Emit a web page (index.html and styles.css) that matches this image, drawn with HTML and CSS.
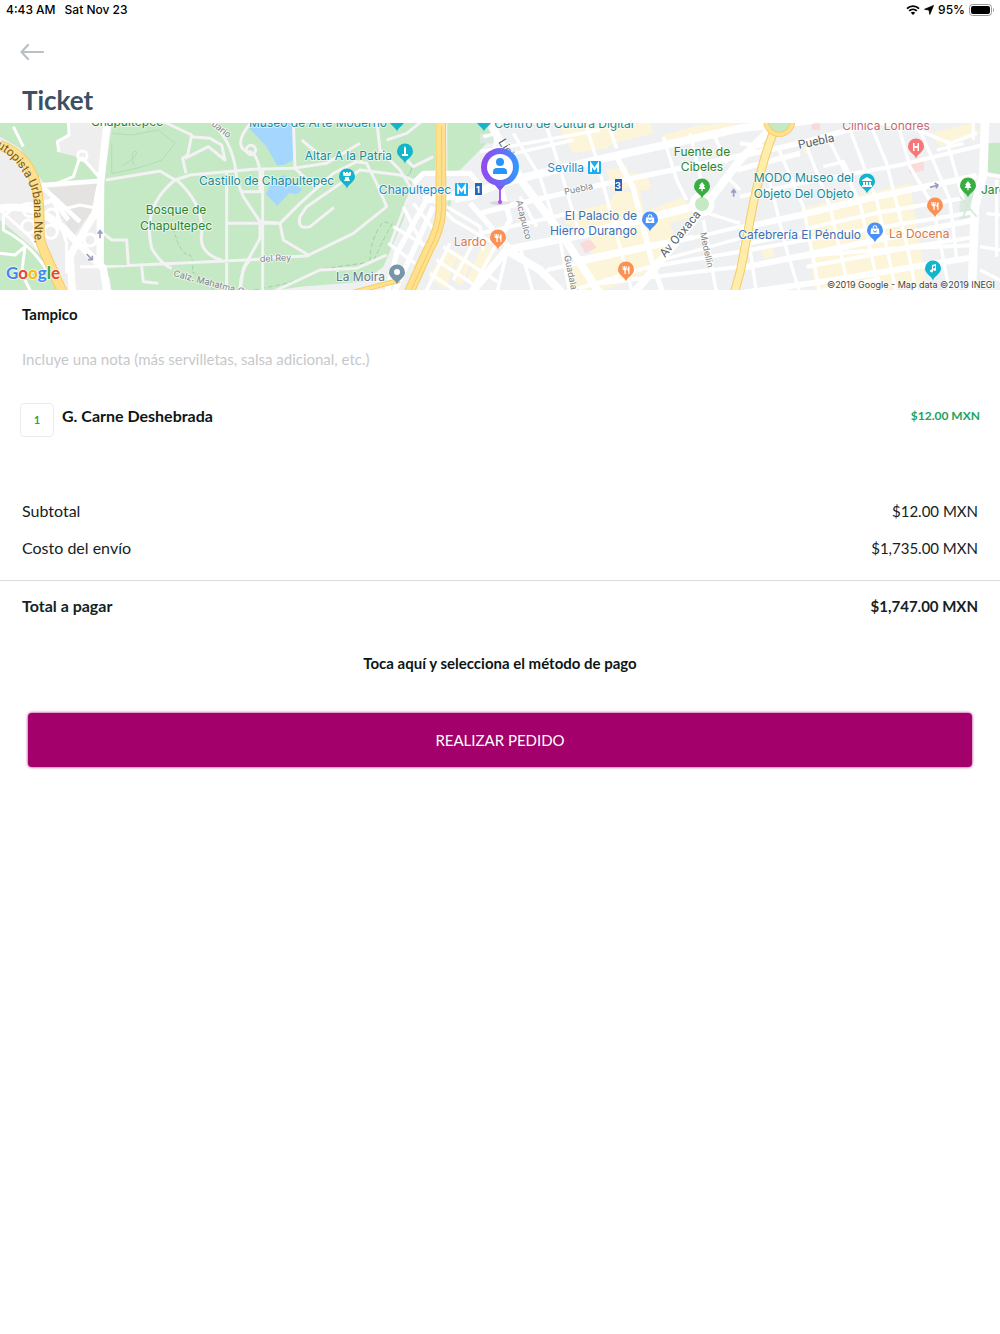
FILE: index.html
```
<!DOCTYPE html>
<html lang="es">
<head>
<meta charset="utf-8">
<meta name="viewport" content="width=device-width, initial-scale=1">
<title>Ticket</title>
<link rel="stylesheet" href="styles.css">
</head>
<body>
<div class="status">
  <div class="status-group"><span>4:43 AM</span><span>Sat Nov 23</span></div>
  <div class="status-side">
    <svg class="wifi" viewBox="0 0 14 10" aria-hidden="true"><path d="M1 3.6a8.6 8.6 0 0 1 12 0M3.2 5.9a5.5 5.5 0 0 1 7.6 0" fill="none" stroke="#000" stroke-width="1.9"/><path d="M7 10 4.8 7.8a3.1 3.1 0 0 1 4.4 0z"/></svg>
    <svg class="locate" viewBox="0 0 10 10" aria-hidden="true"><path d="M9.500.5 5.800 9.400 5 5 .6 4.300z" stroke="#000" stroke-width=".8" stroke-linejoin="round"/></svg>
    <span>95%</span>
    <svg class="battery" viewBox="0 0 25 12" aria-hidden="true"><rect x=".5" y=".5" width="22" height="11" rx="3" fill="none" stroke="#999"/><rect x="2" y="2" width="19" height="8" rx="2"/><path d="M24 4v4q1-.6 1-2t-1-2" fill="#999"/></svg>
  </div>
</div>

<header class="header">
  <button class="back" type="button" aria-label="Volver"><svg viewBox="0 0 24 18"><path d="M23 9H1.500M8 2 1.500 9 8 16" fill="none" stroke="#b9c1c8" stroke-width="2.200" stroke-linecap="round" stroke-linejoin="round"/></svg></button>
  <h1>Ticket</h1>
</header>

<main>
<svg class="map" viewBox="0 123 1000 167" preserveAspectRatio="xMidYMid slice" role="img" aria-label="Mapa de entrega">
  <defs>
    <linearGradient id="halo" x1="0" y1="0" x2="1" y2="0"><stop offset="0" stop-color="#9448ee"/><stop offset=".5" stop-color="#6d68f4"/><stop offset="1" stop-color="#2d9cff"/></linearGradient>
    <path id="pin" d="M0 11.500C-1 7-8 5-8 -.5a8 8 0 0 1 16 0C8 5 1 7 0 11.500z"/>
    <path id="fork" d="M-3.500-4h1v2h.6v-2h1v2h.6v-2h1v3q0 1.200-1 1.600V4h-1.300V.6q-1-.4-1.900-1.600zM1.500-1q0-2.600 2-3V4H2.300V1h-.8z" fill="#fff"/>
    <path id="tree" d="M0-5-3-1h1.300L-3.500 2H-.6V4.200H.6V2h2.900L1.700-1H3z" fill="#fff"/>
    <g id="bag"><path d="M-4-1.500h8l.4 5.500h-8.800z" fill="#fff"/><path d="M-1.800-1.500v-1a1.800 1.800 0 0 1 3.600 0v1" fill="none" stroke="#fff" stroke-width="1.100"/><path d="M-1.500 .5a1.500 1.500 0 0 0 3 0" fill="none" stroke="#4a90f5"/></g>
  </defs>
  <rect y="123" width="1000" height="167" fill="#eef0f2"/>

  <svg x="0" y="120" width="1000" height="174" viewBox="0 0 3000 522">
    <!-- ground -->
    <path fill="#efeeee" d="M0 0H330L310 522H0z"/>
    <path fill="#e4e3e2" d="M140 205 300 190 285 260 220 350 180 280z"/>
    <path fill="#c5e8c5" d="M0 0H205V40L172 65 170 95 230 110 295 165V186L140 198 100 150 60 85 0 50zM0 300 130 410 190 522H0zM338 0H1305V150L1240 180 1210 300 1150 440 1090 485 900 500 760 522H325L312 440 308 200zM1342 0H1500L1470 60 1380 150 1342 160zM1342 230l12 15-12 40z"/>
    <path fill="#a5d6fd" d="M738 0H880V120q-30 20-50 15L800 80 748 25zM812 192l38-27q20 10 30 24l26 20-16 14-22-4-36 38-34-34z"/>
    <path fill="#d8e9df" d="M1440 40h40v30h-40z"/>
    <g fill="#fdf5da">
      <path d="M1670 10 1950 5 1960 40 1840 70 1820 85 1720 100zM1820 150l60-12 20 65-64 10zM1850 215l70 0 40 205-60 60-90 30-95 0-20-60 80-30-10-80-70-30 10-30 120-30zM1900 290l150-60 30 60-70 20 20 60-110 100-40-60z"/>
      <path d="M1990 45l110-30 110-5-5 20-130 40-70 10zM1880 160l60 0 15 45-60 15z"/>
      <path d="M1340 385l35 15-40 110-50-40zM1380 400l35 25-30 70-30-15zM1450 370l40 20-60 100-30-15z"/>
      <path d="M2405 265 2730 190 2780 500 2445 520 2430 405z"/>
      <path d="M2282 385l35-8 8 32-35 8zM2410 85l20-5v20h-20zM2790 40l120-30 30 30-120 40z"/>
    </g>
    <path fill="#fbdada" d="M1740 370l30-12 20 25-35 17zM2725 125l45-10 2 36-42 10zM2435 10h25v20h-25z"/>
    <path fill="#c5e8c5" d="M2960 70l40-2v95l-40-8zM2222 410l20-10v20l-20 15z"/>
    <path fill="#dce9e3" d="M2880 215l50-12 4 90-56 8z"/>

    <!-- park paths -->
    <g fill="none" stroke="#9fd2a5" stroke-width="3">
      <path d="M520 325q20 80 50 80 15 30 5 50 40 20 65 55" stroke-dasharray="12 7"/>
      <path d="M740 515l120-25 120-45 140-20q30-70 60-120M1110 425q0-70 40-120l20 5" stroke-dasharray="14 8"/>
      <path d="M1240 130l-10 30-15 15"/>
      <path d="M335 70V160q90-15 150-40l40-50-50-40-80 15-60-5M370 135q40-20 40-40-20-10-10 40" stroke="#b3dcb5"/>
    </g>
    <g fill="none" stroke="#f4f2f4" stroke-linejoin="round" stroke-width="9">
      <path d="M318 180 480 153 525 180 570 165 760 148 880 145 980 130 1080 70M480 0l95 45-12 60-15 10 10 45M555 115l70-35 50 40-10-45-35-20-60-5M630 0q75 70 80 180l20 50 50 75 0 50-50 90-10 72M750 10l-20 30q-20 40 10 55 30-5 40 60v60l-55 0"/>
      <path d="M525 180q-100 80-70 205 30 50 60 60M530 180q80 70 75 160-10 60 60 80M680 150V522M680 310H835M310 440 780 418M310 340l25 20 45 0 5 75M425 440l5 45 45 5M310 445q20 30 20 77"/>
      <path d="M780 415 920 408 1060 340 1160 260 1130 190 1100 130 1070 125 1000 160 900 250 840 310 780 305M1002 262 930 320q-40 10-30-30l20-30 160-110 120 15 50 20-30 60-50 130M788 150V522M840 310l10 50 80 48M1130 0l10 90 60 60 30 50M880 0l5 145 60 55M905 60l60 50M1160 60l60-20 50-40M1200 100l40 40 60-30"/>
      <path d="M750 420q-30 30-30 90M820 515l140-65 110-5 90-40"/>
      <circle cx="753" cy="90" r="14"/>
    </g>

    <!-- streets left of the park -->
    <g fill="none" stroke="#fff" stroke-linejoin="round">
      <path stroke-width="22" d="M322 0 302 190 300 440M300 200 285 280 230 370 210 410 218 522M0 265q120-20 210 80L310 445l10 70"/>
      <path stroke-width="14" d="M130 195 310 182M105 180 240 305M60 120l60 80M130 250l30-10 45 60"/>
      <path stroke-width="9" d="M205 0l2 45-35 20 5 30M40 20l30 60M245 110l55 65M240 110l-20 60-60 25M180 270l60-15 50 10M140 450q-50-80-130-120v-40q40-40 90-40M0 270l90 80 60 90M0 400l45 5 30-25-10 80 30 60M240 440h70M160 240l40 130v90"/>
      <circle cx="247" cy="107" r="14" stroke-width="9"/><circle cx="270" cy="360" r="18" stroke-width="9"/><circle cx="90" cy="270" r="20" stroke-width="9"/><circle cx="85" cy="320" r="20" stroke-width="9"/><circle cx="155" cy="285" r="18" stroke-width="9"/><circle cx="152" cy="335" r="20" stroke-width="9"/>
    </g>

    <!-- avenues and blocks -->
    <g fill="none" stroke="#fff" stroke-linejoin="round" stroke-width="10">
      <path stroke-width="24" d="M1270 240 1440 215 1500 190 1810 115 2040 65 2220 25 2440 0M1465 0 1570 190 1690 350 1800 522M1520 390 1740 345 2080 260M1410 522 1520 390 1620 450 1690 522M1900 522 2110 265 2220 120 2330 10"/>
      <path stroke-width="16" d="M1440 280 1560 250 1800 195 2210 110 2330 85 2420 65 2650 0M1500 190 1530 300 1490 375M1410 250 1530 385M1240 190 1270 160H1340l70 0 25 30-10 40-60 10M1280 240 1190 400 1160 522M1300 260 1180 522M1850 110 1900 205 1960 440 1990 522M2210 150 2400 100"/>
      <path stroke-width="12" d="M1440 340 1600 305 1730 275M1640 450 2010 370 2220 320 2400 290 2600 240 2930 170M1690 520 1950 440 2220 395 2500 345 2930 275M2220 440 2450 405 2700 385 2930 350M1720 420 1920 380 2080 350M1800 490 2220 440"/>
      <path stroke-width="10" d="M1450 50 1490 40 1470 180M1540 40 1620 170 1680 360 1710 522M1640 20 1680 145 1740 350M1760 20 1790 120 1870 420 1895 510M1820 0 1850 85M1990 50 2030 180 2060 240M2070 40 2110 210M2140 40 2180 130M1440 95 1800 30M1500 110 1720 60M1550 180 1780 130M1560 230 1610 320M1950 430 2220 355M2110 300 2150 522M2125 280 2220 310M2180 170 2220 210M1560 380 1600 520M1520 400 1490 522"/>
      <path d="M1300 240 1360 300 1500 380M1210 260l60 120M1240 250l70 90M1180 320l100 60M1165 370l80 60M1340 260l100 60 10 70M1350 370l-75 150M1330 380l170 110M1310 420l120 80M1490 370l-80 150M1430 350l-70 130M1290 460l90 62"/>
    </g>
    <g fill="none" stroke="#fff" stroke-width="10">
      <path stroke-width="18" d="M2220 325 2400 285 2600 235 2930 168M2220 445 2440 400 2680 350 2930 298M2220 520 2500 480 2930 410"/>
      <path stroke-width="12" d="M2220 230 2400 190 2700 135 2950 75M2420 325 2650 275 2890 235M2420 440 2720 385 2930 375M2220 70 2330 85M2220 375 2430 335M2430 520 2640 475"/>
      <path d="M2335 85 2410 260 2460 522M2420 80 2490 260 2550 522M2480 45 2520 125 2580 250 2640 522M2550 30 2630 240 2690 522M2610 10 2660 130 2720 370 2750 522M2690 0 2730 140 2800 260 2850 522M2750 10 2790 100 2850 240 2870 420M2840 60l50 180M2810 90l80-20M2470 140l60-15 30 60M2240 320l30 202M2280 130l30 60 50 200 40 130M2640 10l90 10 120 50 80-30M2920 0v60M2960 280l40 5M2940 380l60 10M2940 450l60 30M2990 180v230M2940 160l60 10"/>
      <path stroke-width="26" d="M2955 0 2950 160 2925 260 2915 522"/>
      <path stroke="#d2ead5" stroke-width="5" d="M2880 230l50 60M2920 210l-30 80"/>
    </g>

    <!-- motorways -->
    <g fill="none" stroke-linejoin="round">
      <g stroke="#f5cc64"><path stroke-width="31" d="M0 75C90 110 113 180 117 260S112 350 133 395L190 522"/><path stroke-width="32" d="M1322 0 1323 270Q1320 330 1285 390L1225 522"/><path stroke-width="15" d="M1040 522 1200 480"/><path stroke-width="27" d="M2325 25Q2290 110 2260 250L2222 450 2202 522"/></g>
      <g stroke="#fee08d"><path stroke-width="25" d="M0 75C90 110 113 180 117 260S112 350 133 395L190 522"/><path stroke-width="26" d="M1322 0 1323 270Q1320 330 1285 390L1225 522"/><path stroke-width="10" d="M1040 522 1200 480"/><path stroke="#feedab" stroke-width="21" d="M2325 25Q2290 110 2260 250L2222 450 2202 522"/></g>
      <path stroke="#f5cc64" stroke-width="3" d="M1325 20V270Q1320 330 1288 390L1228 522"/>
      <circle cx="2338" cy="3" r="40" fill="#c5e8c5" stroke="#f5cc64" stroke-width="16"/><circle cx="2338" cy="3" r="40" stroke="#fee08d" stroke-width="11"/>
    </g>
    <circle cx="2106" cy="252" r="29" fill="#c5e8c5" stroke="#fff" stroke-width="16"/>
    <path d="M300 355v-22m-7 8 7-9 7 9M260 402l16 17m-12 0h13v-12M2790 202l22-6m-8-7 10 7-6 9M2201 230v-20m-7 8 7-9 7 9" fill="none" stroke="#9a9ec2" stroke-width="5"/>
  </svg>

  <!-- place labels -->
  <g class="places">
    <g class="green"><text x="127" y="126" text-anchor="middle">Chapultepec</text><text x="176" y="214" text-anchor="middle">Bosque de</text><text x="176" y="230" text-anchor="middle">Chapultepec</text><text x="702" y="156" text-anchor="middle">Fuente de</text><text x="702" y="171" text-anchor="middle">Cibeles</text><text x="981" y="194">Jardín</text></g>
    <g class="teal"><text x="318" y="127" text-anchor="middle">Museo de Arte Moderno</text><text x="564" y="128" text-anchor="middle">Centro de Cultura Digital</text><text x="392" y="160" text-anchor="end">Altar A la Patria</text><text x="334" y="185" text-anchor="end">Castillo de Chapultepec</text><text x="854" y="182" text-anchor="end">MODO Museo del</text><text x="854" y="198" text-anchor="end">Objeto Del Objeto</text></g>
    <g class="metro"><text x="451" y="194" text-anchor="end">Chapultepec</text><text x="584" y="172" text-anchor="end">Sevilla</text></g>
    <g class="shop"><text x="637" y="220" text-anchor="end">El Palacio de</text><text x="637" y="235" text-anchor="end">Hierro Durango</text><text x="861" y="239" text-anchor="end">Cafebrería El Péndulo</text></g>
    <g class="food"><text x="454" y="246">Lardo</text><text x="889" y="238">La Docena</text></g>
    <text class="clinic" x="886" y="130" text-anchor="middle">Clínica Londres</text>
    <text class="grey" x="385" y="281" text-anchor="end">La Moira</text>
  </g>
  <g class="streets">
    <text transform="translate(260 262) rotate(-3)">del Rey</text>
    <text transform="translate(173 276) rotate(15)">Calz. Mahatma Gandhi</text>
    <text transform="translate(211 125) rotate(38)">uario</text>
    <text transform="translate(565 195) rotate(-12)">Puebla</text>
    <text transform="translate(516 201) rotate(76)">Acapulco</text>
    <text transform="translate(564 256) rotate(78)">Guadalajara</text>
    <text transform="translate(700 233) rotate(78)">Medellín</text>
  </g>
  <g class="avenues">
    <text transform="translate(498 142) rotate(58)">Lieja</text>
    <text transform="translate(799 149) rotate(-12)">Puebla</text>
    <text transform="translate(665 258) rotate(-50)">Av Oaxaca</text>
    <path id="urbana" d="M-10 145Q10 152 22 171T34 204 35 265" fill="none"/>
    <text class="highway"><textPath href="#urbana" startOffset="7">utopista Urbana Nte.</textPath></text>
  </g>

  <!-- markers -->
  <g fill="#12b5cb">
    <use href="#pin" x="397" y="120"/><use href="#pin" x="484" y="120"/><use href="#pin" x="405" y="152"/><use href="#pin" x="347" y="177"/><use href="#pin" x="867" y="182"/><use href="#pin" x="933" y="269"/>
  </g>
  <g fill="#fc9153"><use href="#pin" x="498" y="238"/><use href="#pin" x="626" y="270"/><use href="#pin" x="935" y="206"/></g>
  <g fill="#38ae41"><use href="#pin" x="702" y="187"/><use href="#pin" x="968" y="186"/></g>
  <g fill="#4a90f5"><use href="#pin" x="650" y="220"/><use href="#pin" x="875" y="231"/></g>
  <use href="#pin" x="916" y="147" fill="#f87678"/><use href="#pin" x="397" y="273" fill="#7896a9"/><circle cx="397" cy="272" r="3" fill="#fff"/>
  <use href="#fork" x="498" y="238"/><use href="#fork" x="626" y="270"/><use href="#fork" x="935" y="206"/>
  <use href="#tree" x="702" y="187"/><use href="#tree" x="968" y="186"/>
  <use href="#bag" x="650" y="219"/><use href="#bag" x="875" y="230"/>
  <g fill="#fff">
    <path d="m405 146 1 2v6h2v2h-6v-2h2v-6z"/>
    <path d="M343 172h2v1h1v-1h2v1h1v-1h2v3l-1 1h-6l-1-1zM345 177h4v2l1 2h-6l1-2z"/>
    <path d="m867 177 5 3v1h-10v-1zM863 182h2v3h-2zm3 0h2v3h-2zm3 0h2v3h-2zM862 185h10v2h-10z"/>
    <path d="m932 265 4-1v6a1.500 1.500 0 1 1-1-2v-2l-2 .5v5a1.500 1.500 0 1 1-1-2z"/>
    <path d="M913 143h1.500v3h3v-3h1.500v8h-1.500v-3h-3v3H913z"/>
  </g>
  <g fill="#18aef5"><rect x="455" y="183" width="13" height="13" rx="1"/><rect x="588" y="161" width="13" height="13" rx="1"/></g>
  <path d="M458 194v-8l3.500 5 3.500-5v8M591 172v-8l3.500 5 3.500-5v8" fill="none" stroke="#fff" stroke-width="2"/>
  <g fill="#2b63b8"><rect x="475" y="183" width="7" height="12"/><rect x="615" y="179" width="7" height="12"/></g>
  <g class="lines"><text x="478" y="193" text-anchor="middle">1</text><text x="618" y="189" text-anchor="middle">3</text></g>

  <!-- customer position -->
  <ellipse cx="500" cy="203" rx="10" ry="2" fill="#000" opacity=".1"/>
  <path d="M500 184v18" stroke="#a55cf2" stroke-width="2"/><circle cx="500" cy="202" r="2" fill="#b04cf0"/>
  <path d="M494 184h12l-5 6h-2z" fill="#7e58ee"/>
  <circle cx="500" cy="167" r="19" fill="url(#halo)"/><circle cx="500" cy="167" r="13" fill="#fff"/>
  <circle cx="500" cy="162" r="4" fill="#2694fb"/><path d="M493 174v-2q0-4 4-4h6q4 0 4 4v2z" fill="#2694fb"/>

  <text class="google" x="6" y="279"><tspan fill="#4285f4">G</tspan><tspan fill="#ea4335">o</tspan><tspan fill="#fbbc05">o</tspan><tspan fill="#4285f4">g</tspan><tspan fill="#34a853">l</tspan><tspan fill="#ea4335">e</tspan></text>
  <text class="credit" x="995" y="288" text-anchor="end">©2019 Google - Map data ©2019 INEGI</text>
</svg>

<section class="order">
  <h2>Tampico</h2>
  <input class="note" type="text" aria-label="Nota" placeholder="Incluye una nota (más servilletas, salsa adicional, etc.)">
  <div class="item">
    <button class="qty" type="button" aria-label="Cantidad: 1">1</button>
    <span class="item-name">G. Carne Deshebrada</span>
    <span class="item-price">$12.00 MXN</span>
  </div>
</section>

<dl class="costs">
  <div class="cost"><dt>Subtotal</dt><dd>$12.00 MXN</dd></div>
  <div class="cost"><dt>Costo del envío</dt><dd>$1,735.00 MXN</dd></div>
  <div class="cost total"><dt>Total a pagar</dt><dd>$1,747.00 MXN</dd></div>
</dl>

<div class="actions">
  <button class="method" type="button">Toca aquí y selecciona el método de pago</button>
  <button class="submit" type="button">REALIZAR PEDIDO</button>
</div>
</main>
</body>
</html>
```

FILE: styles.css
```
* { box-sizing: border-box; }

body {
  margin: 0;
  background: #fff;
  color: #14231f;
  font: 15px/20px Lato, "Liberation Sans", sans-serif;
}

h1, h2, dl, dd { margin: 0; }

button {
  border: 0;
  padding: 0;
  background: none;
  color: inherit;
  font: inherit;
}

/* Status bar */
.status {
  display: flex;
  justify-content: space-between;
  height: 20px;
  padding: 0 6px;
  color: #000;
  font: 500 12px/20px Inter, "Liberation Sans", sans-serif;
}
.status-group { display: flex; gap: 9px; }
.status-side { display: flex; align-items: center; gap: 4px; }
.wifi { width: 14px; height: 10px; }
.locate { width: 10px; height: 10px; }
.battery { width: 25px; height: 12px; }

/* Header */
.header { padding: 20px 22px 7px 20px; }
.back { display: block; height: 24px; }
.back svg { display: block; width: 24px; height: 18px; }
h1 {
  margin-top: 20px;
  padding-left: 2px;
  color: #3b5065;
  font-size: 26px;
  line-height: 32px;
}

/* Map */
.map { display: block; width: 100%; height: 167px; }
.map text { paint-order: stroke; stroke: #fff; stroke-width: 2px; stroke-opacity: .6; stroke-linejoin: round; }
.places { font: 12px Inter, sans-serif; }
.streets { fill: #808488; font: 9px Inter, sans-serif; }
.avenues { fill: #5d6166; font: 12px Roboto, sans-serif; }
.map .highway { fill: #75592b; stroke: none; }
.green { fill: #27862f; }
.teal { fill: #178c9b; }
.metro { fill: #168ed0; }
.shop { fill: #3a70b8; }
.food { fill: #d97949; }
.clinic { fill: #c56a74; }
.grey { fill: #647583; }
.map .lines text { fill: #fff; stroke: none; font: 700 9px Inter, sans-serif; }
.google { font: 700 17px Lato, sans-serif; }
.credit { fill: #444; font: 9px Inter, sans-serif; }

/* Order */
.order { padding: 14px 20px 0; }
h2 { padding-left: 2px; color: #0d1614; font-size: 15px; line-height: 20px; }
.note {
  display: block;
  width: 100%;
  height: 40px;
  margin-top: 15px;
  border: 0;
  padding: 0 2px;
  background: none;
  font: inherit;
}
.note::placeholder { color: #c7c8cc; opacity: 1; }
.item { display: flex; gap: 8px; margin-top: 24px; }
.qty {
  width: 34px;
  height: 34px;
  border: 1px solid #ebebeb;
  border-radius: 4px;
  color: #22a35f;
  font-size: 11px;
  font-weight: 700;
}
.item-name { flex: 1; padding-top: 3px; color: #0d1614; font-size: 16px; font-weight: 700; }
.item-price { padding-top: 3px; color: #22a35f; font-size: 12px; font-weight: 700; }

/* Costs */
.costs { padding-top: 56px; }
.cost { display: flex; justify-content: space-between; padding: 8px 22px 9px; }
.cost dt { font-size: 16px; }
.total { margin-top: 13px; border-top: 1px solid #dcdcdc; padding-top: 15px; font-weight: 700; }

/* Actions */
.actions { display: flex; flex-direction: column; padding: 18px 28px; }
.method { height: 40px; color: #0d1614; font-weight: 700; }
.submit {
  height: 54px;
  margin-top: 30px;
  border-radius: 4px;
  background: #a3006b;
  box-shadow: 0 0 3px #a3006b;
  color: #fff;
}
```
